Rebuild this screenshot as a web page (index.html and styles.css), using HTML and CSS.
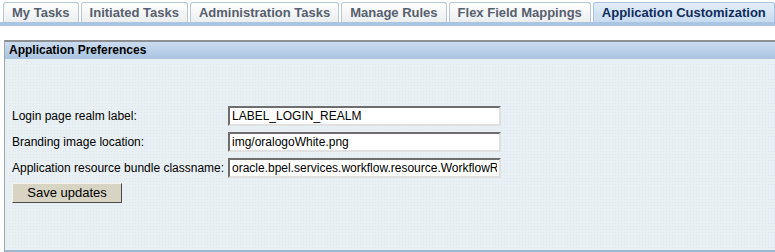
FILE: index.html
```html
<!DOCTYPE html>
<html>
<head>
    <meta charset="UTF-8">
    <title>Application Customization</title>
    <link rel="stylesheet" href="styles.css">
</head>
<body>
<div class="tabs">
    <span class="tab">My Tasks</span>
    <span class="tab">Initiated Tasks</span>
    <span class="tab">Administration Tasks</span>
    <span class="tab">Manage Rules</span>
    <span class="tab">Flex Field Mappings</span>
    <span class="tab current">Application Customization</span>
</div>
<div class="panel">
    <div class="panel-head">Application Preferences</div>
    <div class="panel-body">
        <div class="row">
            <span class="label">Login page realm label:</span>
            <input type="text" value="LABEL_LOGIN_REALM"/>
        </div>
        <div class="row">
            <span class="label">Branding image location:</span>
            <input type="text" value="img/oralogoWhite.png"/>
        </div>
        <div class="row">
            <span class="label">Application resource bundle classname:</span>
            <input type="text" value="oracle.bpel.services.workflow.resource.WorkflowResourceBundle"/>
        </div>
        <div class="btn">Save updates</div>
    </div>
</div>
</body>
</html>
```

FILE: styles.css
```css
* {
    margin: 0;
    padding: 0;
    box-sizing: border-box;
}

body {
    width: 775px;
    height: 252px;
    overflow: hidden;
    background: #fff;
    font-family: "Liberation Sans", Arial, sans-serif;
    font-size: 12px;
    color: #000;
}

.tabs {
    display: flex;
    gap: 2px;
    padding: 2px 0 0 3px;
    border-bottom: 4px solid #a9c5e2;
    white-space: nowrap;
}

.tab {
    flex-shrink: 0;
    height: 20px;
    line-height: 19px;
    padding: 0 8px;
    border: 1px solid #b9c6d3;
    border-bottom: 0;
    border-radius: 3px 3px 0 0;
    background: linear-gradient(#ffffff, #ebedef);
    font-weight: bold;
    font-size: 13px;
    color: #56606e;
}

.tab.current {
    background: linear-gradient(#e2edf8, #c8dbef);
    color: #0f2c5c;
    border-color: #a9c5e2;
}

.panel {
    margin: 14px 0 0 4px;
    height: 212px;
    border-top: 2px solid #8d9195;
    border-left: 1px solid #9aa6b1;
    border-bottom: 2px solid #9fb7cf;
    background-color: #e9f0f4;
    background-image: radial-gradient(#dfe7ee 0.6px, transparent 0.8px);
    background-size: 3px 3px;
}

.panel-head {
    height: 17px;
    line-height: 17px;
    padding-left: 4px;
    font-weight: bold;
    font-size: 12px;
    background: linear-gradient(#cbdcf0, #a9c3df);
}

.panel-body {
    padding: 47px 0 0 7px;
}

.row {
    display: flex;
    align-items: center;
    height: 20px;
    margin-bottom: 6px;
}

.label {
    width: 216px;
    flex-shrink: 0;
    white-space: nowrap;
}

.row input {
    width: 273px;
    height: 20px;
    padding: 0 2px;
    border: 2px solid;
    border-color: #6e6e6e #e0e0e0 #e0e0e0 #6e6e6e;
    background: #fff;
    font-family: "Liberation Sans", Arial, sans-serif;
    font-size: 12px;
    color: #000;
    outline: none;
}

.btn {
    width: 110px;
    height: 20px;
    margin-top: -1px;
    line-height: 18px;
    text-align: center;
    border: 1px solid;
    border-color: #f4f2ea #4a4a4a #4a4a4a #f4f2ea;
    background: #d8d4c4;
    font-size: 13px;
    cursor: pointer;
}
```
